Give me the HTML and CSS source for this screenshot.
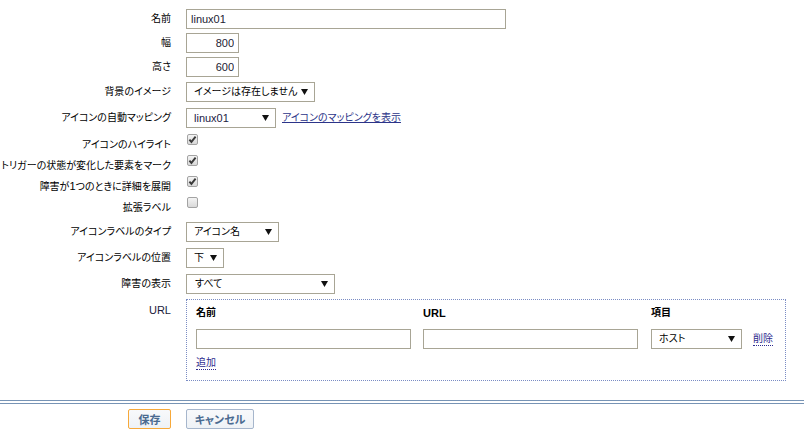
FILE: index.html
```html
<!DOCTYPE html>
<html lang="ja">
<head>
<meta charset="utf-8">
<title>マップ</title>
<link rel="stylesheet" href="styles.css">
</head>
<body>
<div class="form">
  <div class="row m4">
    <div class="lbl">名前</div>
    <div class="fld"><input class="inp w-name" type="text" value="linux01"></div>
  </div>
  <div class="row m4">
    <div class="lbl">幅</div>
    <div class="fld"><input class="inp num" type="text" value="800"></div>
  </div>
  <div class="row m5">
    <div class="lbl">高さ</div>
    <div class="fld"><input class="inp num" type="text" value="600"></div>
  </div>
  <div class="row m6">
    <div class="lbl">背景のイメージ</div>
    <div class="fld"><div class="sel w-bg"><span class="txt">イメージは存在しません</span><svg class="arr" width="7" height="6" viewBox="0 0 7 6"><polygon points="0,0 7,0 3.5,6"/></svg></div></div>
  </div>
  <div class="row m6">
    <div class="lbl">アイコンの自動マッピング</div>
    <div class="fld">
      <div class="sel w-map"><span class="txt lat">linux01</span><svg class="arr" width="7" height="6" viewBox="0 0 7 6"><polygon points="0,0 7,0 3.5,6"/></svg></div>
      <a class="link" href="#">アイコンのマッピングを表示</a>
    </div>
  </div>
  <div class="row cb">
    <div class="lbl">アイコンのハイライト</div>
    <div class="fld"><span class="chk on"><svg width="11" height="11" viewBox="0 0 11 11"><path d="M2.4 5.6 L4.4 7.9 L8.6 2.6"/></svg></span></div>
  </div>
  <div class="row cb">
    <div class="lbl">トリガーの状態が変化した要素をマーク</div>
    <div class="fld"><span class="chk on"><svg width="11" height="11" viewBox="0 0 11 11"><path d="M2.4 5.6 L4.4 7.9 L8.6 2.6"/></svg></span></div>
  </div>
  <div class="row cb">
    <div class="lbl">障害が<span class="lat">1</span>つのときに詳細を展開</div>
    <div class="fld"><span class="chk on"><svg width="11" height="11" viewBox="0 0 11 11"><path d="M2.4 5.6 L4.4 7.9 L8.6 2.6"/></svg></span></div>
  </div>
  <div class="row cb m4">
    <div class="lbl">拡張ラベル</div>
    <div class="fld"><span class="chk"></span></div>
  </div>
  <div class="row m6">
    <div class="lbl">アイコンラベルのタイプ</div>
    <div class="fld"><div class="sel w-type"><span class="txt">アイコン名</span><svg class="arr" width="7" height="6" viewBox="0 0 7 6"><polygon points="0,0 7,0 3.5,6"/></svg></div></div>
  </div>
  <div class="row m6">
    <div class="lbl">アイコンラベルの位置</div>
    <div class="fld"><div class="sel w-pos"><span class="txt">下</span><svg class="arr" width="7" height="6" viewBox="0 0 7 6"><polygon points="0,0 7,0 3.5,6"/></svg></div></div>
  </div>
  <div class="row m5">
    <div class="lbl">障害の表示</div>
    <div class="fld"><div class="sel w-prob"><span class="txt">すべて</span><svg class="arr" width="7" height="6" viewBox="0 0 7 6"><polygon points="0,0 7,0 3.5,6"/></svg></div></div>
  </div>
  <div class="row top">
    <div class="lbl lbl-url lat">URL</div>
    <div class="fld">
      <div class="urlbox">
        <div class="ugrid">
          <div class="uh">名前</div>
          <div class="uh lat">URL</div>
          <div class="uh">項目</div>
          <div></div>
          <input class="inp w-uin" type="text" value="">
          <input class="inp w-uin" type="text" value="">
          <div class="sel w-elem"><span class="txt">ホスト</span><svg class="arr" width="7" height="6" viewBox="0 0 7 6"><polygon points="0,0 7,0 3.5,6"/></svg></div>
          <a class="dlink" href="#">削除</a>
        </div>
        <a class="dlink add" href="#">追加</a>
      </div>
    </div>
  </div>
</div>
<div class="footer">
  <div class="rule"></div>
  <div class="buttons">
    <div class="bcell"><button class="btn save">保存</button></div>
    <div class="fld"><button class="btn cancel">キャンセル</button></div>
  </div>
</div>
</body>
</html>
```
FILE: styles.css
```css
* { box-sizing: border-box; }
html, body { margin: 0; padding: 0; background: #ffffff; }
body {
  font-family: "Liberation Sans", "Noto Sans CJK JP", sans-serif;
  font-size: 10px;
  line-height: 14px;
  color: #000000;
  font-feature-settings: "palt";
}
.lat { font-size: 11px; }
.form { padding-top: 9px; }
.row { display: flex; align-items: center; }
.row.m4 { margin-bottom: 4px; }
.row.m5 { margin-bottom: 5px; }
.row.m6 { margin-bottom: 6px; }
.row.cb { height: 21px; }
.row.cb.m4 { margin-bottom: 4px; }
.row.top { align-items: flex-start; }
.lbl {
  width: 171px;
  flex: none;
  text-align: right;
  white-space: nowrap;
  color: #000000;
}
.lbl-url { padding-top: 4px; color: #1a1a3a; }
.fld {
  margin-left: 15px;
  display: flex;
  align-items: center;
}
.row.cb .fld { align-self: flex-start; }
.inp {
  height: 20px;
  border: 1px solid #a8a595;
  background: #ffffff;
  font-family: "Liberation Sans", "Noto Sans CJK JP", sans-serif;
  font-size: 11px;
  color: #222233;
  padding: 0 4px;
  margin: 0;
  outline: none;
}
.w-name { width: 320px; }
.num { width: 53px; text-align: right; }
.sel {
  height: 20px;
  border: 1px solid #a8a595;
  background: #ffffff;
  display: flex;
  align-items: center;
  justify-content: space-between;
  padding: 0 6px 0 7px;
  color: #000000;
  white-space: nowrap;
}
.sel .txt { line-height: 14px; }
.sel .lat { color: #221a44; }
.arr { fill: #111111; flex: none; }
.w-bg { width: 129px; }
.w-map { width: 90px; }
.w-type { width: 93px; }
.w-pos { width: 38px; padding-left: 7px; }
.w-prob { width: 149px; padding-left: 8px; }
.w-elem { width: 91px; padding-left: 7px; margin-top: 1px; }
.link {
  margin-left: 6px;
  color: #2c3489;
  text-decoration: underline;
}
.chk {
  display: block;
  width: 11px;
  height: 11px;
  margin-left: 1px;
  border: 1px solid #a3a3a3;
  border-radius: 2px;
  background: linear-gradient(#f4f4f4, #d9d9d9);
}
.chk svg { display: block; margin: -1px 0 0 -1px; }
.chk path { fill: none; stroke: #3a3a3a; stroke-width: 1.9; }
.urlbox {
  width: 600px;
  border: 1px dotted #7a8cc4;
  padding: 6px 9px 10px 9px;
}
.ugrid {
  display: grid;
  grid-template-columns: 215px 215px 91px auto;
  column-gap: 12px;
  row-gap: 8px;
  align-items: center;
}
.ugrid > :nth-child(3), .ugrid > :nth-child(7) { margin-left: 1px; }
.uh { font-weight: bold; color: #000000; }
.w-uin { width: 215px; }
.dlink {
  color: #2e2a8e;
  text-decoration: none;
  border-bottom: 1px dotted #2e2a8e;
  line-height: 13px;
  justify-self: start;
}
.ugrid .dlink { margin-top: 1px; }
.add { display: inline-block; margin-top: 7px; }
.footer { margin-top: 19px; }
.rule {
  height: 4px;
  border-top: 1px solid #7794b5;
  border-bottom: 1px solid #7794b5;
}
.buttons { display: flex; padding-top: 5px; }
.bcell { width: 171px; display: flex; justify-content: flex-end; flex: none; }
.btn {
  height: 20px;
  margin: 0;
  padding: 0;
  border-radius: 2px;
  background: linear-gradient(#f8f9fb, #eef2f6);
  font-family: "Liberation Sans", "Noto Sans CJK JP", sans-serif;
  font-size: 11px;
  font-weight: bold;
  color: #4a6a90;
  cursor: pointer;
  font-feature-settings: "palt";
}
.save { width: 43px; border: 1px solid #f7a93a; }
.cancel { width: 68px; border: 1px solid #a6b6cc; }
```
